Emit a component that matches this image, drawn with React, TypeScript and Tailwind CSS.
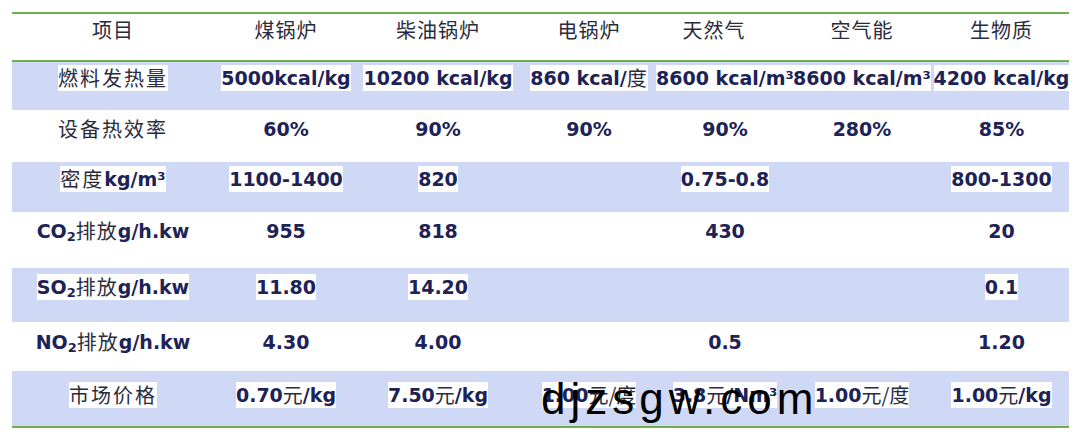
import React from "react";

const LAT = "font-['DejaVu_Sans',sans-serif] font-bold text-[19px] text-[#1d2257]";
const CJK = "font-['Noto_Sans_CJK_SC','Noto_Sans_CJK_JP',sans-serif] font-normal text-[20px] text-[#2a2c3e]";

function L({ children }: { children: React.ReactNode }) {
  return <span className={LAT}>{children}</span>;
}
function C({ children, track = "tracking-[1px]" }: { children: React.ReactNode; track?: string }) {
  return <span className={`${CJK} ${track}`}>{children}</span>;
}
function Sub({ children }: { children: React.ReactNode }) {
  return <span className="font-['DejaVu_Sans',sans-serif] font-bold text-[13px] text-[#1d2257] relative top-[6px]">{children}</span>;
}

function HL({ children, cls = "" }: { children?: React.ReactNode; cls?: string }) {
  if (!children) return null;
  return (
    <span className={`inline-flex items-center bg-white h-[26px] leading-[26px] whitespace-nowrap ${cls}`}>{children}</span>
  );
}

const GRID = "grid grid-cols-[202px_144px_160px_142px_130px_144px_135px]";

type Row = { h: string; pt: string; blue: boolean; cells: React.ReactNode[] };

function Cells({ cells, pt }: { cells: React.ReactNode[]; pt: string }) {
  return (
    <>
      {cells.map((c, i) => (
        <div key={i} className={`flex justify-center items-start ${pt} whitespace-nowrap`}>
          <HL>{c}</HL>
        </div>
      ))}
    </>
  );
}

export default function App() {
  const rows: Row[] = [
    {
      h: "h-[48px]",
      pt: "pt-[3px]",
      blue: true,
      cells: [
        <C track="tracking-[2px]">燃料发热量</C>,
        <L>5000kcal/kg</L>,
        <L>10200 kcal/kg</L>,
        <>
          <L>860 kcal/</L>
          <C>度</C>
        </>,
        <L>8600 kcal/m³</L>,
        <L>8600 kcal/m³</L>,
        <L>4200 kcal/kg</L>,
      ],
    },
    {
      h: "h-[52px]",
      pt: "pt-[6px]",
      blue: false,
      cells: [
        <C track="tracking-[2px]">设备热效率</C>,
        <L>60%</L>,
        <L>90%</L>,
        <L>90%</L>,
        <L>90%</L>,
        <L>280%</L>,
        <L>85%</L>,
      ],
    },
    {
      h: "h-[50px]",
      pt: "pt-[4px]",
      blue: true,
      cells: [
        <>
          <C track="tracking-[2px]">密度</C>
          <L>kg/m³</L>
        </>,
        <L>1100-1400</L>,
        <L>820</L>,
        null,
        <L>0.75-0.8</L>,
        null,
        <L>800-1300</L>,
      ],
    },
    {
      h: "h-[56px]",
      pt: "pt-[6px]",
      blue: false,
      cells: [
        <>
          <L>CO</L>
          <Sub>2</Sub>
          <C>排放</C>
          <L>g/h.kw</L>
        </>,
        <L>955</L>,
        <L>818</L>,
        null,
        <L>430</L>,
        null,
        <L>20</L>,
      ],
    },
    {
      h: "h-[54px]",
      pt: "pt-[6px]",
      blue: true,
      cells: [
        <>
          <L>SO</L>
          <Sub>2</Sub>
          <C>排放</C>
          <L>g/h.kw</L>
        </>,
        <L>11.80</L>,
        <L>14.20</L>,
        null,
        null,
        null,
        <L>0.1</L>,
      ],
    },
    {
      h: "h-[49px]",
      pt: "pt-[7px]",
      blue: false,
      cells: [
        <>
          <L>NO</L>
          <Sub>2</Sub>
          <C>排放</C>
          <L>g/h.kw</L>
        </>,
        <L>4.30</L>,
        <L>4.00</L>,
        null,
        <L>0.5</L>,
        null,
        <L>1.20</L>,
      ],
    },
    {
      h: "h-[55px]",
      pt: "pt-[11px]",
      blue: true,
      cells: [
        <C track="tracking-[2px]">市场价格</C>,
        <>
          <L>0.70</L>
          <C track="">元</C>
          <L>/kg</L>
        </>,
        <>
          <L>7.50</L>
          <C track="">元</C>
          <L>/kg</L>
        </>,
        <>
          <L>1.00</L>
          <C track="">元/度</C>
        </>,
        <>
          <L>3.8</L>
          <C track="">元</C>
          <L>/Nm³</L>
        </>,
        <>
          <L>1.00</L>
          <C track="">元/度</C>
        </>,
        <>
          <L>1.00</L>
          <C track="">元</C>
          <L>/kg</L>
        </>,
      ],
    },
  ];

  const headers = ["项目", "煤锅炉", "柴油锅炉", "电锅炉", "天然气", "空气能", "生物质"];

  return (
    <div className="relative w-[1080px] h-[442px] bg-white overflow-hidden">
      <div className="ml-[12px] w-[1057px] pt-[12px]">
        <div className="border-t-2 border-b-2 border-[#6fae4a]">
          <div className={`${GRID} h-[48px] bg-white border-b-2 border-[#6fae4a]`}>
            {headers.map((h, i) => (
              <div key={i} className={`flex justify-center items-start pt-[3px] ${i === 4 ? "pr-[22px]" : ""}`}>
                <span className={`${CJK} tracking-[1px] leading-[26px]`}>{h}</span>
              </div>
            ))}
          </div>
          {rows.map((r, i) => (
            <div key={i} className={`${GRID} ${r.h} ${r.blue ? "bg-[#cfd9f5]" : "bg-white"}`}>
              <Cells cells={r.cells} pt={r.pt} />
            </div>
          ))}
        </div>
      </div>
      <div className="absolute left-[541px] top-[379px] font-['Liberation_Sans',Arial,sans-serif] text-[44px] leading-[40px] tracking-[5px] text-black whitespace-nowrap">
        djzsgw.com
      </div>
    </div>
  );
}
